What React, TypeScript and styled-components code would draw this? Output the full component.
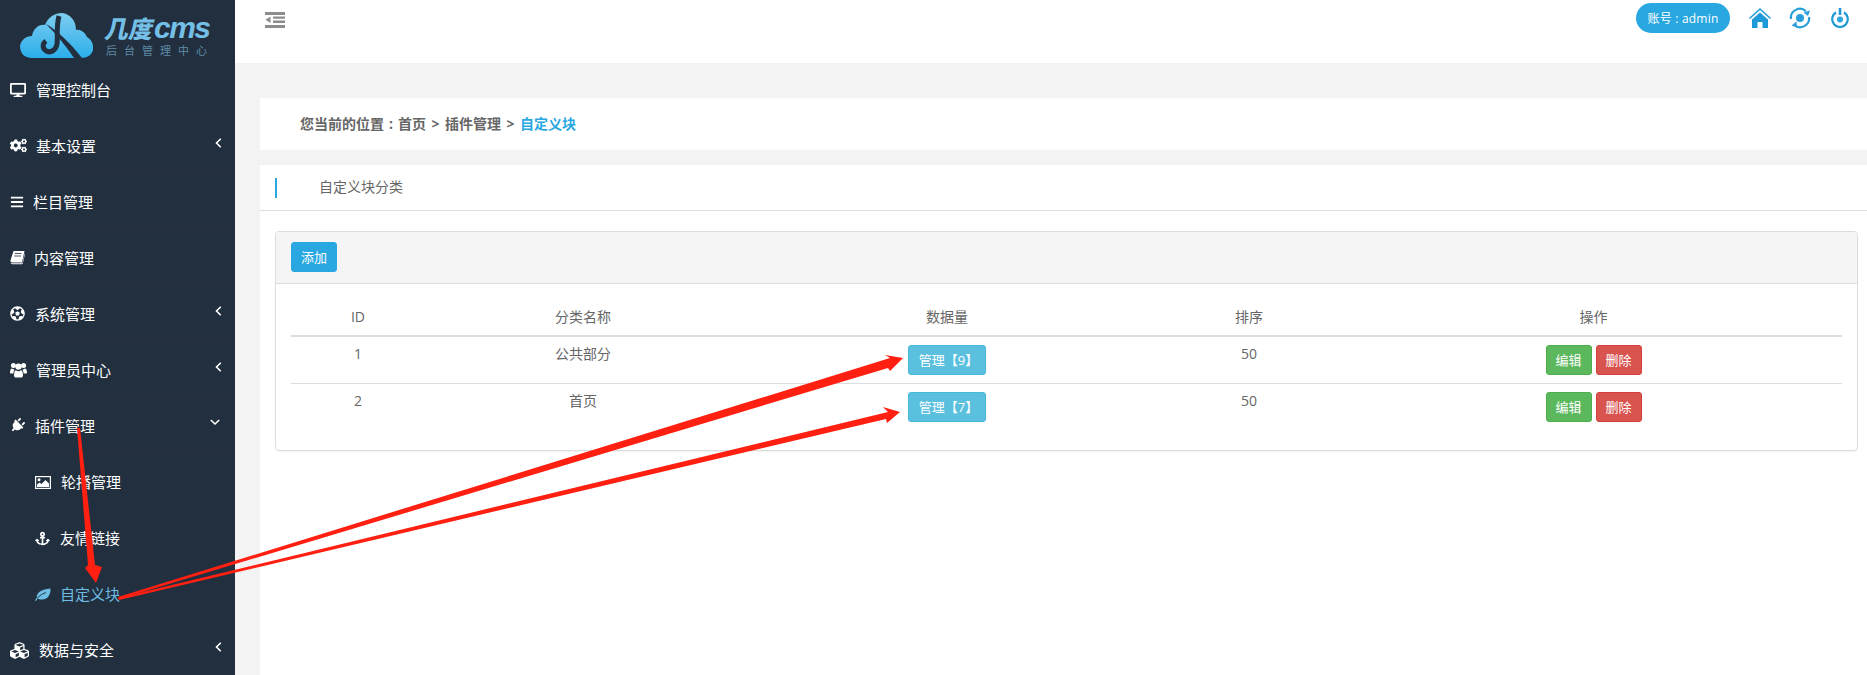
import React from 'react';
import styled, { createGlobalStyle } from 'styled-components';
import { FaDesktop, FaCogs, FaBars, FaFutbol, FaPlug, FaAnchor, FaCubes } from 'react-icons/fa';

const Global = createGlobalStyle`
  html, body { margin: 0; padding: 0; background: #fff; }
  body { font-family: "Open Sans", "Noto Sans CJK SC", sans-serif; font-size: 14px; color: #666; }
  * { box-sizing: border-box; }
`;

const Page = styled.div`
  position: relative; display: flex; width: 1867px; height: 675px; overflow: hidden;
`;
const Sidebar = styled.aside`
  width: 235px; flex: none; height: 675px; background: #222f3f; overflow: hidden;
`;
const LogoWrap = styled.div`
  height: 63px; display: flex; align-items: flex-start; padding: 13px 0 0 20px; gap: 13px;
`;
const LogoWords = styled.div`
  display: flex; flex-direction: column; color: #74bfe6;
`;
const LogoName = styled.div`
  display: flex; align-items: baseline; height: 27px; margin-top: 1px; white-space: nowrap;
`;
const LogoCjk = styled.span`
  font: 900 24px/27px "Noto Sans CJK SC", sans-serif; transform: skewX(-12deg); display: inline-block;
`;
const LogoLatin = styled.span`
  font: italic 700 30px/27px "Liberation Sans", sans-serif; letter-spacing: -1.5px;
`;
const LogoSub = styled.div`
  font: 400 11px/14px "Noto Sans CJK SC", sans-serif; letter-spacing: 7px; color: #5f8ba8; white-space: nowrap; margin-top: 2px;
`;
const MenuItem = styled.div<{ $sub?: boolean; $active?: boolean; $last?: boolean }>`
  height: 56px; display: flex; align-items: center; position: relative;
  padding: 0 0 2px ${p => (p.$sub ? 35 : 10)}px;
  border-bottom: ${p => (p.$sub || p.$last ? 'none' : '1px solid #2c3038')};
  color: ${p => (p.$active ? '#6ebde3' : '#fff')};
  font: 400 15px/20px "Noto Sans CJK SC", sans-serif;
`;
const IconBox = styled.span<{ $w: number; $size: number }>`
  width: ${p => p.$w}px; flex: none; display: flex; align-items: center; font-size: ${p => p.$size}px;
`;
const PlugIcon = styled(FaPlug)`
  transform: rotate(45deg);
`;
const Caret = styled.svg`
  position: absolute; right: 13px; top: 19px;
`;
const DownCaretSvg = styled.svg`
  position: absolute; right: 15px; top: 20px;
`;
const Main = styled.main`
  flex: 1; display: flex; flex-direction: column; background: #f3f3f3; min-width: 0;
`;
const Header = styled.header`
  height: 63px; background: #fff; flex: none; display: flex; align-items: flex-start;
  justify-content: space-between; padding: 3px 0 0 30px;
`;
const Toggle = styled.svg`
  margin-top: 9px;
`;
const HeaderRight = styled.div`
  display: flex; align-items: center; height: 30px;
`;
const Account = styled.div`
  width: 94px; height: 30px; border-radius: 15px; background: #29a7e1; color: #fff; margin-right: 18px;
  display: flex; align-items: center; justify-content: center; font-size: 12px; white-space: nowrap; letter-spacing: .2px;
`;
const HeadIcon = styled.span`
  width: 24px; height: 24px; margin-right: 16px; display: flex; align-items: center; justify-content: center;
  &:last-child { margin-right: 15px; }
`;
const Content = styled.div`
  flex: 1; margin: 35px 0 0 25px; display: flex; flex-direction: column;
`;
const Crumbs = styled.div`
  height: 52px; background: #fff; display: flex; align-items: center; padding: 0 0 2px 40px;
  font-weight: 700; font-size: 14px; color: #666; flex: none;
`;
const Colon = styled.span`
  margin: 0 5px;
`;
const Sep = styled.span`
  margin: 0 5.5px;
`;
const Here = styled.span`
  color: #29a7e1;
`;
const Body = styled.div`
  margin-top: 15px; flex: 1; background: #fff; display: flex; flex-direction: column;
`;
const TitleRow = styled.div`
  height: 46px; border-bottom: 1px solid #ddd; display: flex; align-items: center; padding-left: 15px; flex: none;
  margin-bottom: 20px;
`;
const TitleBar = styled.span`
  width: 2px; height: 20px; background: #29a7e1; margin-right: 42px;
`;
const TitleText = styled.span`
  font-size: 14px; line-height: 18px; margin-bottom: 2px;
`;
const Panel = styled.section`
  margin: 0 9px 0 15px; height: 220px; border: 1px solid #ddd; border-radius: 4px;
  box-shadow: 0 1px 1px rgba(0,0,0,.05);
`;
const PanelHead = styled.div`
  height: 52px; background: #f5f5f5; border-bottom: 1px solid #ddd; padding: 10px 12px 0 15px; border-radius: 3px 3px 0 0;
`;
const Btn = styled.span<{ $bg: string; $bd: string; $w: number }>`
  display: inline-flex; align-items: center; justify-content: center; height: 30px; width: ${p => p.$w}px;
  background: ${p => p.$bg}; border: 1px solid ${p => p.$bd}; border-radius: 3px; color: #fff; font-size: 13px; white-space: nowrap;
  padding-bottom: 1px;
`;
const ManageBtn = styled(Btn)`
  padding-left: 3px;
`;
const Actions = styled.div`
  display: flex; justify-content: center; gap: 4px;
`;
const Table = styled.table`
  width: 1551px; margin: 15px 0 0 15px; border-collapse: collapse; table-layout: fixed; font-size: 14px; color: #666;
`;
const Th = styled.th<{ $w: number }>`
  width: ${p => p.$w}px; height: 37px; font-weight: 400; text-align: center; border-bottom: 2px solid #ddd; padding: 0 0 2px;
`;
const Td = styled.td`
  height: 47px; text-align: center; padding: 8px 0; line-height: 18px; vertical-align: top; border-bottom: 1px solid #ddd;
  tr:last-child & { border-bottom: none; }
`;
const CellBtn = styled.div`
  display: flex; justify-content: center;
`;
const Overlay = styled.svg`
  position: absolute; left: 0; top: 0; pointer-events: none;
`;

const Logo = () => (
  <svg width="73" height="45" viewBox="0 0 73 45">
    <defs>
      <linearGradient id="lg" x1="0" y1="0" x2="0" y2="1">
        <stop offset="0" stopColor="#7fcdf0" />
        <stop offset="1" stopColor="#2aaeea" />
      </linearGradient>
    </defs>
    <path fill="url(#lg)" d="M12 45C4 45 0 40 0 33C1 27 6 23 12 23C13 16 19 11 25 12C28 4 35 0 42 0C50 1 56 7 56 17C60 16 65 19 67 24C71 26 74 31 73 37C72 42 67 45 61 45Z" />
    <path fill="none" stroke="#222f3f" strokeWidth="5" d="M39 3C36 14 38 24 37 31C36 38 29 41 25 37C22 34 23 30 26 28" />
    <path fill="#222f3f" d="M26 11C38 18 50 30 62 45L54 45C46 33 36 21 26 11Z" />
  </svg>
);

const Book = () => (
  <svg width="15" height="15" viewBox="0 0 15 15" fill="#fff">
    <path d="M3.5 1H14.5L12 12.5H2C0.5 12.5 0.3 11.5 0.6 10ZM3.2 13.2H12.4L14.6 3.5L15 4L12.8 13.6C12.7 14 12.4 14.2 12 14.2H2.4C1.4 14.2 .8 13.7 .6 13C1 13.1 2 13.2 3.2 13.2Z" />
    <path d="M4.8 3.5H11.5M4.2 6H11" stroke="#222f3f" strokeWidth=".8" />
  </svg>
);
const Users = () => (
  <svg width="17" height="16" viewBox="0 0 17 16" fill="#fff">
    <circle cx="3.4" cy="3.4" r="2.5" />
    <circle cx="13.6" cy="3.4" r="2.5" />
    <circle cx="8.5" cy="4.6" r="3.2" />
    <path d="M0 11C0 8 .8 6.6 2.2 6.6C3 7.3 3.8 7.5 4.6 7.4C4 8.6 3.4 10 3.4 11.4H.8C.3 11.4 0 11.3 0 11Z" />
    <path d="M17 11C17 8 16.2 6.6 14.8 6.6C14 7.3 13.2 7.5 12.4 7.4C13 8.6 13.6 10 13.6 11.4H16.2C16.7 11.4 17 11.3 17 11Z" />
    <path d="M4 13.5C4 10.5 4.6 8.2 6 8.2C6.8 8.9 7.6 9.2 8.5 9.2C9.4 9.2 10.2 8.9 11 8.2C12.4 8.2 13 10.5 13 13.5C13 14.8 12.2 15.6 11 15.6H6C4.8 15.6 4 14.8 4 13.5Z" />
  </svg>
);
const Picture = () => (
  <svg width="16" height="13" viewBox="0 0 16 13">
    <rect x=".6" y=".6" width="14.8" height="11.8" fill="none" stroke="#fff" strokeWidth="1.2" />
    <circle cx="4" cy="3.8" r="1.5" fill="#fff" />
    <path d="M2 11V8.5L4.5 6.5L6.5 8L10.5 4L14 7.5V11Z" fill="#fff" />
  </svg>
);
const Leaf = () => (
  <svg width="16" height="13" viewBox="0 0 16 13">
    <path d="M2 10.5C0.5 5.5 5 1.5 15.5 .5C16 5 13.5 11.5 7 11.5C5 11.5 3.5 11 2 10.5Z" fill="#6ebde3" />
    <path d="M.5 12.5C3 8.5 6.5 6 11 4.5" fill="none" stroke="#222f3f" strokeWidth=".9" />
    <path d="M.3 12.8L2.2 10.2" stroke="#6ebde3" strokeWidth="1.2" />
  </svg>
);

const Refresh = () => (
  <svg width="22" height="22" viewBox="0 0 22 22" fill="none" stroke="#29a0dc" strokeWidth="2.2">
    <circle cx="11" cy="11" r="4" fill="#29a0dc" stroke="none" />
    <path d="M2 12A9 9 0 0 1 17 4.2" />
    <path d="M20 10A9 9 0 0 1 5 17.8" />
    <path d="M21 3.5L19 9L14.5 5.5Z" fill="#29a0dc" stroke="none" />
    <path d="M7.5 14.5L8 20.5L2.5 18.5Z" fill="#29a0dc" stroke="none" />
  </svg>
);
const Power = () => (
  <svg width="18" height="20" viewBox="0 0 18 20" fill="none" stroke="#1e9ad6" strokeWidth="2.2">
    <path d="M5 4.5A7.8 7.8 0 1 0 13 4.5" />
    <path d="M9 0V7" strokeWidth="2.6" />
    <circle cx="9" cy="11.5" r="3" fill="#29a7e1" stroke="none" />
  </svg>
);
const Home = () => (
  <svg width="22" height="20" viewBox="0 0 22 20">
    <path d="M.5 10.5L11 1L21.5 10.5" fill="none" stroke="#1e9ad6" strokeWidth="1.5" />
    <path d="M3 11.5L11 4.5L19 11.5V20H13.5V14H8.5V20H3Z" fill="#1e9ad6" />
  </svg>
);

const LeftCaret = () => (
  <Caret width="7" height="10" viewBox="0 0 7 10">
    <path d="M5.8 .8L1.5 5L5.8 9.2" fill="none" stroke="#fff" strokeWidth="1.6" />
  </Caret>
);
const DownCaret = () => (
  <DownCaretSvg width="10" height="7" viewBox="0 0 10 7">
    <path d="M.8 1L5 5L9.2 1" fill="none" stroke="#fff" strokeWidth="1.6" />
  </DownCaretSvg>
);

const menu = [
  { icon: <FaDesktop />, w: 26, s: 16, label: '管理控制台' },
  { icon: <FaCogs />, w: 26, s: 17, label: '基本设置', caret: 'left' },
  { icon: <FaBars />, w: 23, s: 14, label: '栏目管理' },
  { icon: <Book />, w: 24, s: 15, label: '内容管理' },
  { icon: <FaFutbol />, w: 25, s: 15, label: '系统管理', caret: 'left' },
  { icon: <Users />, w: 26, s: 16, label: '管理员中心', caret: 'left' },
  { icon: <PlugIcon />, w: 25, s: 15, label: '插件管理', caret: 'down' },
  { icon: <Picture />, w: 26, s: 16, label: '轮播管理', sub: true },
  { icon: <FaAnchor />, w: 25, s: 15, label: '友情链接', sub: true },
  { icon: <Leaf />, w: 25, s: 15, label: '自定义块', sub: true, active: true },
  { icon: <FaCubes />, w: 29, s: 19, label: '数据与安全', caret: 'left', last: true },
];

const rows = [
  { id: 1, name: '公共部分', count: 9 },
  { id: 2, name: '首页', count: 7 },
];

export default function App() {
  return (
    <Page>
      <Global />
      <Sidebar>
        <LogoWrap>
          <Logo />
          <LogoWords>
            <LogoName><LogoCjk>几度</LogoCjk><LogoLatin>cms</LogoLatin></LogoName>
            <LogoSub>后台管理中心</LogoSub>
          </LogoWords>
        </LogoWrap>
        {menu.map(m => (
          <MenuItem key={m.label} $sub={m.sub} $active={m.active} $last={m.last}>
            <IconBox $w={m.w} $size={m.s}>{m.icon}</IconBox>
            {m.label}
            {m.caret === 'left' && <LeftCaret />}
            {m.caret === 'down' && <DownCaret />}
          </MenuItem>
        ))}
      </Sidebar>
      <Main>
        <Header>
          <Toggle width="20" height="16" viewBox="0 0 20 16" fill="#8c8c8c">
            <path d="M0 0H20V3H0ZM8 4.5H20V6.8H8ZM8 8.6H20V10.9H8ZM0 13H20V16H0ZM5.5 4.5V11L0.5 7.8Z" />
          </Toggle>
          <HeaderRight>
            <Account>账号 : admin</Account>
            <HeadIcon><Home /></HeadIcon>
            <HeadIcon><Refresh /></HeadIcon>
            <HeadIcon><Power /></HeadIcon>
          </HeaderRight>
        </Header>
        <Content>
          <Crumbs>您当前的位置<Colon>:</Colon>首页<Sep>&gt;</Sep>插件管理<Sep>&gt;</Sep><Here>自定义块</Here></Crumbs>
          <Body>
            <TitleRow>
              <TitleBar />
              <TitleText>自定义块分类</TitleText>
            </TitleRow>
            <Panel>
              <PanelHead>
                <Btn $bg="#29a7e1" $bd="#29a7e1" $w={46}>添加</Btn>
              </PanelHead>
              <Table>
                <thead>
                  <tr>
                    <Th $w={134}>ID</Th>
                    <Th $w={316}>分类名称</Th>
                    <Th $w={412}>数据量</Th>
                    <Th $w={192}>排序</Th>
                    <Th $w={497}>操作</Th>
                  </tr>
                </thead>
                <tbody>
                  {rows.map(r => (
                    <tr key={r.id}>
                      <Td>{r.id}</Td>
                      <Td>{r.name}</Td>
                      <Td><CellBtn><ManageBtn $bg="#5bc0de" $bd="#46b8da" $w={78}>管理【{r.count}】</ManageBtn></CellBtn></Td>
                      <Td>50</Td>
                      <Td>
                        <Actions>
                          <Btn $bg="#5cb85c" $bd="#4cae4c" $w={46}>编辑</Btn>
                          <Btn $bg="#d9534f" $bd="#d43f3a" $w={46}>删除</Btn>
                        </Actions>
                      </Td>
                    </tr>
                  ))}
                </tbody>
              </Table>
            </Panel>
          </Body>
        </Content>
      </Main>
      <Overlay width="1867" height="675" viewBox="0 0 1867 675">
        <g fill="#ff2012">
          <path d="M77 428L80 428L95 565L102 567L96 583L85 568L88 565Z" />
          <path d="M118 597L890 358L885 355L903 358L890 371L888 368L119 599Z" />
          <path d="M118 598L888 412L883 407L900 412L887 423L886 419L119 600Z" />
        </g>
      </Overlay>
    </Page>
  );
}
